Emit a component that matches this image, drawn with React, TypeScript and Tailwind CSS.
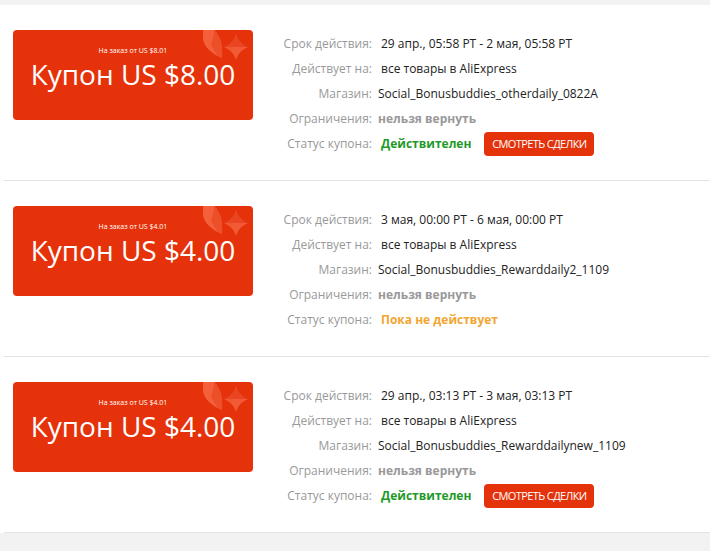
import React from "react";

type Coupon = {
  min: string;
  amount: string;
  period: string;
  store: string;
  status: "ok" | "pending";
};

const coupons: Coupon[] = [
  {
    min: "На заказ от US $8.01",
    amount: "Купон US $8.00",
    period: "29 апр., 05:58 PT - 2 мая, 05:58 PT",
    store: "Social_Bonusbuddies_otherdaily_0822A",
    status: "ok",
  },
  {
    min: "На заказ от US $4.01",
    amount: "Купон US $4.00",
    period: "3 мая, 00:00 PT - 6 мая, 00:00 PT",
    store: "Social_Bonusbuddies_Rewarddaily2_1109",
    status: "pending",
  },
  {
    min: "На заказ от US $4.01",
    amount: "Купон US $4.00",
    period: "29 апр., 03:13 PT - 3 мая, 03:13 PT",
    store: "Social_Bonusbuddies_Rewarddailynew_1109",
    status: "ok",
  },
];

function Deco() {
  return (
    <svg
      className="absolute left-0 top-0"
      width="240"
      height="40"
      viewBox="0 0 240 40"
    >
      <path d="M190 0 L201 0 C207 6 210 14 209 28 C199 24 191 17 190 9 Z" fill="#f3603a" />
      <path d="M201 0 C207 6 210 14 209 28 C204 25 200 20 198 14 C200 9 201 4 201 0 Z" fill="#ec4f2a" />
      <path d="M223 3 C225 10 228 14 235 17 L211 17 C218 14 221 10 223 3 Z" fill="#ea4522" />
      <path d="M211 17 L235 17 C228 20 225 24 223 30 C221 24 218 20 211 17 Z" fill="#f05a35" />
    </svg>
  );
}

function Row({ c }: { c: Coupon }) {
  const label = "w-[119px] shrink-0 text-right text-[#999]";
  return (
    <div className="ml-1 flex h-[176px] items-start border-b border-[#e3e3e3] pl-[9px] pt-[25px]">
      <div className="relative flex h-[90px] w-[240px] shrink-0 flex-col items-center overflow-hidden rounded-[4px] bg-[#e6320a] pt-[16px] text-white">
        <Deco />
        <div className="relative text-[7px] leading-[10px]">{c.min}</div>
        <div className="relative mt-[-1px] text-[28px] leading-[38px]">{c.amount}</div>
      </div>
      <div className="mt-[1px] text-[12px] leading-[25px]">
        <div className="flex">
          <div className={label}>Срок действия:</div>
          <div className="ml-[6px] pl-[3px] text-[#222]">{c.period}</div>
        </div>
        <div className="flex">
          <div className={label}>Действует на:</div>
          <div className="ml-[6px] pl-[3px] text-[#222]">все товары в AliExpress</div>
        </div>
        <div className="flex">
          <div className={label}>Магазин:</div>
          <div className="ml-[6px] text-[#222]">{c.store}</div>
        </div>
        <div className="flex">
          <div className={label}>Ограничения:</div>
          <div className="ml-[6px] font-bold text-[#999]">нельзя вернуть</div>
        </div>
        <div className="flex h-[25px] items-center">
          <div className={label}>Статус купона:</div>
          {c.status === "ok" ? (
            <>
              <div className="ml-[6px] pl-[3px] font-bold text-[#1f9a2a]">Действителен</div>
              <button className="ml-[13px] flex h-[24px] w-[110px] items-center justify-center rounded-[4px] bg-[#e4330b] text-[11px] leading-none tracking-[-0.6px] text-white">
                СМОТРЕТЬ СДЕЛКИ
              </button>
            </>
          ) : (
            <div className="ml-[6px] pl-[3px] font-bold text-[#f2a631]">Пока не действует</div>
          )}
        </div>
      </div>
    </div>
  );
}

export default function App() {
  return (
    <div
      className="min-h-[551px] bg-[#f2f2f2] pt-[5px]"
      style={{ fontFamily: "'Open Sans', 'Noto Sans', sans-serif" }}
    >
      <div className="bg-white">
        {coupons.map((c, i) => (
          <Row key={i} c={c} />
        ))}
      </div>
    </div>
  );
}
